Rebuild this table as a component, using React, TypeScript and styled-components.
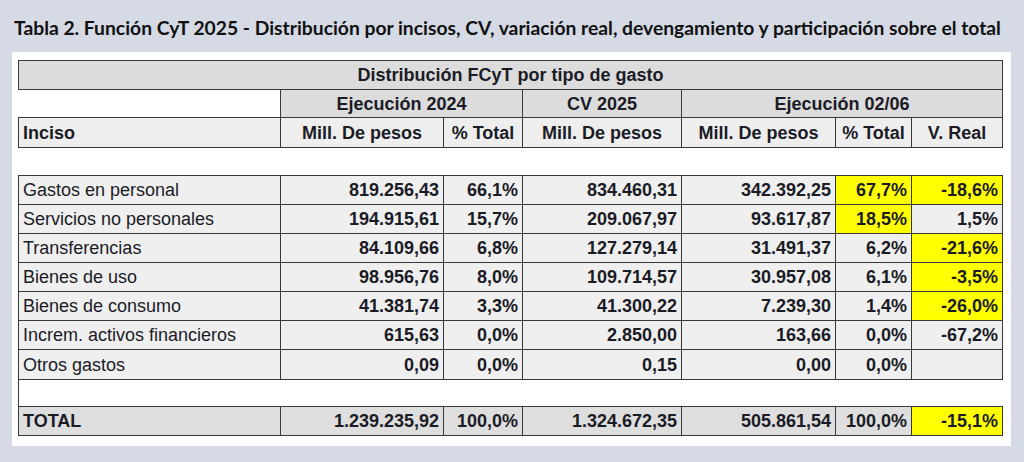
import React from "react";
import styled, { createGlobalStyle } from "styled-components";

const Global = createGlobalStyle`
  html, body { margin: 0; padding: 0; }
  body { background: #d5dae5; }
`;

const Page = styled.div`
  width: 1024px;
  height: 462px;
  box-sizing: border-box;
  background: #d5dae5;
  display: flex;
  flex-direction: column;
  padding: 0 13px 0 12px;
  overflow: hidden;
`;

const Title = styled.h1`
  margin: 0;
  height: 52px;
  box-sizing: border-box;
  display: flex;
  align-items: center;
  padding: 3px 0 0 2px;
  font-family: "Lato", "Open Sans", sans-serif;
  font-weight: 700;
  font-size: 19.3px;
  color: #111;
  white-space: nowrap;
`;

const Panel = styled.div`
  background: #ffffff;
  padding: 8px 9px 10px 6px;
  box-sizing: border-box;
`;

const Table = styled.table`
  border-collapse: collapse;
  table-layout: fixed;
  width: 984px;
  font-family: "Liberation Sans", Arial, sans-serif;
  font-size: 18px;
  color: #1b1b26;
`;

type CellProps = {
  $bg?: string;
  $align?: "left" | "center" | "right";
  $bold?: boolean;
  $h?: number;
  $noBorder?: boolean;
  $leftOnly?: boolean;
  $noLeft?: boolean;
};

const Cell = styled.td<CellProps>`
  border: 1px solid #383838;
  ${(p) => (p.$noLeft ? "border-left: none;" : "")}
  ${(p) => (p.$noBorder ? "border: none;" : "")}
  ${(p) => (p.$leftOnly ? "border-right: none;" : "")}
  background: ${(p) => p.$bg ?? "#efefef"};
  text-align: ${(p) => p.$align ?? "right"};
  font-weight: ${(p) => (p.$bold ? 700 : 400)};
  height: ${(p) => p.$h ?? 29}px;
  padding: 0 4px 0 4px;
  box-sizing: border-box;
  white-space: nowrap;
  overflow: hidden;
  line-height: 20px;
`;

const HEAD_DARK = "#dcdcdc";
const HEAD_LIGHT = "#eeeeee";
const YELLOW = "#ffff00";
const TOTAL_BG = "#dedede";

type Row = {
  name: string;
  e24: string;
  p24: string;
  cv: string;
  e06: string;
  p06: string;
  vr: string;
  yP?: boolean;
  yV?: boolean;
};

const rows: Row[] = [
  { name: "Gastos en personal", e24: "819.256,43", p24: "66,1%", cv: "834.460,31", e06: "342.392,25", p06: "67,7%", vr: "-18,6%", yP: true, yV: true },
  { name: "Servicios no personales", e24: "194.915,61", p24: "15,7%", cv: "209.067,97", e06: "93.617,87", p06: "18,5%", vr: "1,5%", yP: true },
  { name: "Transferencias", e24: "84.109,66", p24: "6,8%", cv: "127.279,14", e06: "31.491,37", p06: "6,2%", vr: "-21,6%", yV: true },
  { name: "Bienes de uso", e24: "98.956,76", p24: "8,0%", cv: "109.714,57", e06: "30.957,08", p06: "6,1%", vr: "-3,5%", yV: true },
  { name: "Bienes de consumo", e24: "41.381,74", p24: "3,3%", cv: "41.300,22", e06: "7.239,30", p06: "1,4%", vr: "-26,0%", yV: true },
  { name: "Increm. activos financieros", e24: "615,63", p24: "0,0%", cv: "2.850,00", e06: "163,66", p06: "0,0%", vr: "-67,2%" },
  { name: "Otros gastos", e24: "0,09", p24: "0,0%", cv: "0,15", e06: "0,00", p06: "0,0%", vr: "" },
];

const widths = [262, 163, 79, 159, 154, 76, 91];

export default function App() {
  return (
    <>
      <Global />
      <Page>
        <Title>
          Tabla 2. Función CyT 2025 - Distribución por incisos, CV, variación real, devengamiento y participación sobre el total
        </Title>
        <Panel>
          <Table>
            <colgroup>
              {widths.map((w, i) => (
                <col key={i} style={{ width: w }} />
              ))}
            </colgroup>
            <tbody>
              <tr>
                <Cell colSpan={7} $bg={HEAD_DARK} $align="center" $bold $h={29}>
                  Distribución FCyT por tipo de gasto
                </Cell>
              </tr>
              <tr>
                <Cell $bg="#ffffff" $noLeft $h={28} />
                <Cell colSpan={2} $bg={HEAD_DARK} $align="center" $bold $h={28}>
                  Ejecución 2024
                </Cell>
                <Cell $bg={HEAD_DARK} $align="center" $bold $h={28}>
                  CV 2025
                </Cell>
                <Cell colSpan={3} $bg={HEAD_DARK} $align="center" $bold $h={28}>
                  Ejecución 02/06
                </Cell>
              </tr>
              <tr>
                <Cell $bg={HEAD_LIGHT} $align="left" $bold $h={30}>
                  Inciso
                </Cell>
                <Cell $bg={HEAD_LIGHT} $align="center" $bold $h={30}>
                  Mill. De pesos
                </Cell>
                <Cell $bg={HEAD_LIGHT} $align="center" $bold $h={30}>
                  % Total
                </Cell>
                <Cell $bg={HEAD_LIGHT} $align="center" $bold $h={30}>
                  Mill. De pesos
                </Cell>
                <Cell $bg={HEAD_LIGHT} $align="center" $bold $h={30}>
                  Mill. De pesos
                </Cell>
                <Cell $bg={HEAD_LIGHT} $align="center" $bold $h={30}>
                  % Total
                </Cell>
                <Cell $bg={HEAD_LIGHT} $align="center" $bold $h={30}>
                  V. Real
                </Cell>
              </tr>
              <tr>
                <Cell colSpan={7} $bg="#ffffff" $noBorder $h={28} />
              </tr>
              {rows.map((r, i) => (
                <tr key={r.name}>
                  <Cell $align="left" $h={i === 6 ? 30 : 29}>
                    {r.name}
                  </Cell>
                  <Cell $bold>{r.e24}</Cell>
                  <Cell $bold>{r.p24}</Cell>
                  <Cell $bold>{r.cv}</Cell>
                  <Cell $bold>{r.e06}</Cell>
                  <Cell $bold $bg={r.yP ? YELLOW : undefined}>
                    {r.p06}
                  </Cell>
                  <Cell $bold $bg={r.yV ? YELLOW : undefined}>
                    {r.vr}
                  </Cell>
                </tr>
              ))}
              <tr>
                <Cell colSpan={7} $bg="#ffffff" $leftOnly $h={27} />
              </tr>
              <tr>
                <Cell $bg={TOTAL_BG} $align="left" $bold>
                  TOTAL
                </Cell>
                <Cell $bg={TOTAL_BG} $bold>1.239.235,92</Cell>
                <Cell $bg={TOTAL_BG} $bold>100,0%</Cell>
                <Cell $bg={TOTAL_BG} $bold>1.324.672,35</Cell>
                <Cell $bg={TOTAL_BG} $bold>505.861,54</Cell>
                <Cell $bg={TOTAL_BG} $bold>100,0%</Cell>
                <Cell $bg={YELLOW} $bold>-15,1%</Cell>
              </tr>
            </tbody>
          </Table>
        </Panel>
      </Page>
    </>
  );
}
